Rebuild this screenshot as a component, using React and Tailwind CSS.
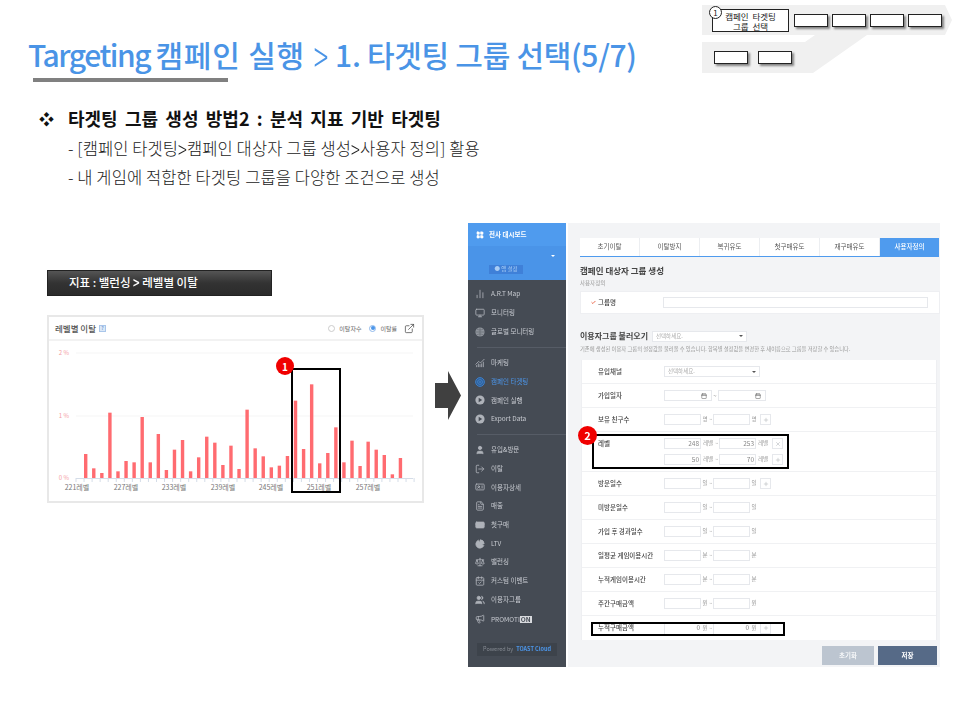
import React from "react";
import {
  LayoutGrid, ChartNoAxesColumn, Monitor, ChartNoAxesCombined, User, LogOut,
  IdCard, FileText, CreditCard, ChartPie, Scale, CalendarCheck, Users, Megaphone, Calendar, Plus, X, Check, ExternalLink,
} from "lucide-react";

const bars = [72,29,15,196,20,51,47,183,47,132,24,85,114,20,62,124,106,39,97,27,205,89,65,32,37,66,232,87,281,44,75,152,47,112,36,109,85,69,11,60];
const xLabels = [["221레벨",77],["227레벨",126],["233레벨",174],["239레벨",223],["245레벨",271],["251레벨",319],["257레벨",368]];

function Chart() {
  return (
    <svg width="373" height="159" viewBox="49 342 373 159" className="block">
      {[[354,"2 %"],[417,"1 %"],[479,"0 %"]].map(([y,t]) => (
        <g key={t}>
          {y !== 479 && <line x1="76" x2="413" y1={y} y2={y} stroke="#f5f5f5" strokeWidth="1" />}
          <text x="69" y={y + 1.5} textAnchor="end" fontSize="6" fill="#f4a0a2" fontFamily="Noto Sans CJK KR, sans-serif">{t}</text>
        </g>
      ))}
      <line x1="76" x2="413" y1="479.5" y2="479.5" stroke="#d5dde8" />
      {Array.from({ length: 43 }).map((_, i) => (
        <line key={i} x1={76 + i * 8.05} x2={76 + i * 8.05} y1="479" y2="483" stroke="#d5dde8" />
      ))}
      {bars.map((h, i) => (
        <rect key={i} x={85.7 + i * 8.07 - 1.7} y={479 - h / 3} width="3.4" height={h / 3} fill="#ff6b70" />
      ))}
      {xLabels.map(([t, x]) => (
        <text key={t} x={x} y="490.5" textAnchor="middle" fontSize="7" fill="#777" fontFamily="Noto Sans CJK KR, sans-serif">{t}</text>
      ))}
    </svg>
  );
}

const navBox = "w-[34px] h-[13px] bg-white border border-[#222] shadow-[2px_2px_2px_rgba(0,0,0,0.45)]";

function Nav() {
  return (
    <div className="relative w-[250px] h-[68px] mt-[5px] mr-[8px]">
      <svg width="250" height="68" viewBox="0 0 250 68" className="absolute inset-0">
        <polygon points="0,0 243,0 250,15 243,30 165,30 111,68 0,68 0,37 103,37 113,30 0,30" fill="#f0f0f0" />
      </svg>
      <div className="relative flex items-center h-[31px] pl-[10px] gap-[4px]">
        <div className="relative w-[77px] h-[23px] mr-[1px] bg-white border border-[#222] flex items-center justify-center text-center text-[8.5px] leading-[10px] text-[#222]">
          <span>캠페인 &nbsp;타겟팅<br />그룹 &nbsp;선택</span>
          <div className="absolute -left-[4px] -top-[4px] w-[13px] h-[13px] rounded-full bg-white border border-[#222] flex items-center justify-center text-[8px] leading-none">1</div>
        </div>
        <div className={navBox} />
        <div className={navBox} />
        <div className={navBox} />
        <div className={navBox} />
      </div>
      <div className="relative flex items-center pl-[12px] gap-[10px] mt-[15px]">
        <div className={navBox} />
        <div className={navBox} />
      </div>
    </div>
  );
}

function PlayIcon() {
  return (
    <svg width="10" height="10" viewBox="0 0 10 10" className="shrink-0">
      <circle cx="5" cy="5" r="4.6" fill="#aeb2b9" />
      <polygon points="3.7,2.8 7.2,5 3.7,7.2" fill="#454b54" />
    </svg>
  );
}
function GlobeIcon() {
  return (
    <svg width="10" height="10" viewBox="0 0 10 10" className="shrink-0">
      <circle cx="5" cy="5" r="4.6" fill="#8f949c" />
      <path d="M5 .5v9M.5 5h9M2 2.2c2 1 4 1 6 0M2 7.8c2-1 4-1 6 0" stroke="#5f646d" strokeWidth=".6" fill="none" />
    </svg>
  );
}
function TargetIcon() {
  return (
    <svg width="10" height="10" viewBox="0 0 10 10" className="shrink-0">
      <circle cx="5" cy="5" r="4.4" fill="#2f5f96" stroke="#3f7fc8" />
      <circle cx="5" cy="5" r="2.4" fill="none" stroke="#3f7fc8" />
      <circle cx="5" cy="5" r=".9" fill="#3f7fc8" />
    </svg>
  );
}
const wrap = (C, fill) => () => <C size={10} strokeWidth={2} className="text-[#aeb2b9] shrink-0" fill={fill ? "currentColor" : "none"} />;

const side1 = [
  [wrap(ChartNoAxesColumn), "A.R.T Map"], [wrap(Monitor), "모니터링"], [GlobeIcon, "글로벌 모니터링"],
];
const side2 = [
  [wrap(ChartNoAxesCombined), "마케팅"], [TargetIcon, "캠페인 타겟팅", true], [PlayIcon, "캠페인 실행"], [PlayIcon, "Export Data"],
];
const side3 = [
  [wrap(User, true), "유입&방문"], [wrap(LogOut), "이탈"], [wrap(IdCard), "이용자상세"], [wrap(FileText), "매출"], [wrap(CreditCard, true), "첫구매"],
  [wrap(ChartPie, true), "LTV"], [wrap(Scale), "밸런싱"], [wrap(CalendarCheck), "커스텀 이벤트"], [wrap(Users, true), "이용자그룹"],
];

function SideItem({ icon: Icon, label, active, h = "h-[18.9px]" }) {
  return (
    <div className={`flex items-center ${h} pl-[7px] gap-[6px] text-[6.5px] ${active ? "text-[#4c96ea]" : "text-[#c9ccd2]"}`}>
      <Icon />
      <span>{label}</span>
    </div>
  );
}

function Sidebar() {
  return (
    <div className="w-[98px] h-full bg-[#454b54] flex flex-col shrink-0">
      <div className="h-[23px] bg-[#4f9bee] flex items-center pl-[8px] gap-[5px] text-white text-[6.5px] font-bold">
        <LayoutGrid size={8} fill="white" />
        전사 대시보드
      </div>
      <div className="h-[34px] bg-[#4a94e8] relative flex items-end pl-[21px] pb-[6px]">
        <div className="w-[34px] h-[9px] bg-[#3f80d8] flex items-center justify-center text-[5.5px] text-[#a9cdf5]">● 앱 설정</div>
        <div className="absolute right-[11px] top-[9px] w-0 h-0 border-x-[2px] border-x-transparent border-t-[2px] border-t-white" />
      </div>
      <div className="pt-[4.5px]">
        {side1.map(([i, l]) => <SideItem key={l} icon={i} label={l} />)}
      </div>
      <div className="ml-[9px] h-px bg-[#565c66] my-[5.5px]" />
      <div>
        {side2.map(([i, l, a]) => <SideItem key={l} icon={i} label={l} active={a} />)}
      </div>
      <div className="ml-[9px] h-px bg-[#565c66] my-[5px]" />
      <div className="pt-[1px]">
        {side3.map(([i, l]) => <SideItem key={l} icon={i} label={l} h="h-[18.7px]" />)}
        <div className="flex items-center h-[21px] pl-[7px] gap-[6px] text-[6.5px] text-[#c9ccd2]">
          <Megaphone size={10} className="text-[#aeb2b9]" />
          <span className="flex items-center">PROMOTI<span className="bg-[#d8dade] text-[#454b54] font-bold px-[1px] leading-[7px] text-[6.5px]">ON</span></span>
        </div>
      </div>
      <div className="mx-[9px] mt-[13px] h-[13px] bg-[#3d434b] flex items-center justify-center gap-[3px] text-[5.5px] text-[#868b93]">
        Powered by <span className="text-[#4c96ea] font-bold">TOAST Cloud</span>
      </div>
    </div>
  );
}

const inputCls = "h-[11px] bg-white border border-[#e6e8ec] flex items-center justify-end text-[6.5px] text-[#888] pr-[1px] shrink-0";

function Range({ unit, a, b, btn, wide, bare }) {
  const box = bare ? "h-[11px] bg-white border-l border-[#e6e8ec] flex items-center justify-end text-[6.5px] text-[#888] pr-[1px] shrink-0 w-[37px]" : `${inputCls} w-[37px]`;
  return (
    <div className="flex items-center h-[11px] text-[5.5px] text-[#999]">
      <div className={box}>{a}</div>
      <span className={`text-center ${wide ? "w-[12px]" : "w-[6px]"} ml-[1px]`}>{unit}</span>
      <span className="w-[5px] text-center">~</span>
      <div className={box}>{b}</div>
      <span className={`${wide ? "w-[12px]" : "w-[6px]"} text-center ml-[1px]`}>{unit}</span>
      {btn && (
        <div className="w-[11px] h-[11px] ml-[3px] bg-white border border-[#e6e8ec] flex items-center justify-center text-[#a9adb3]">
          {btn === "x" ? <X size={6} /> : <Plus size={6} />}
        </div>
      )}
    </div>
  );
}

function Row({ label, children, h = "h-[24px]", top, last }) {
  return (
    <div className={`flex ${h} ${top ? "items-start pt-[7px]" : "items-center"} ${last ? "" : "border-b border-[#f0f1f3]"} relative`}>
      <div className="w-[82px] pl-[16px] text-[6.5px] font-medium text-[#444] shrink-0">{label}</div>
      {children}
    </div>
  );
}

function SelectBox({ w, text = "선택하세요." }) {
  return (
    <div className={`${w} h-[11px] bg-white border border-[#e6e8ec] flex items-center justify-between px-[3px] text-[5.5px] text-[#aaa]`}>
      {text}
      <div className="w-0 h-0 border-x-[2px] border-x-transparent border-t-[2px] border-t-[#555]" />
    </div>
  );
}

function Main() {
  const tabs = ["초기이탈", "이탈방지", "복귀유도", "첫구매유도", "재구매유도", "사용자정의"];
  return (
    <div className="flex-1 ml-[2px] bg-[#f3f4f6] pt-[15px] pl-[12px] relative">
      <div className="flex h-[19px] w-[359px] bg-white border-b border-[#4f9bee]">
        {tabs.map((t, i) => (
          <div key={t} className={`flex-1 flex items-center justify-center text-[6.5px] ${i === 5 ? "bg-[#4f9bee] text-white font-medium" : "border-r border-[#eceef1] text-[#555]"}`}>{t}</div>
        ))}
      </div>
      <div className="mt-[7px] text-[8.5px] leading-[12px] font-bold text-[#444]">캠페인 대상자 그룹 생성</div>
      <div className="mt-[3px] text-[5.5px] leading-[8px] text-[#999]">사용자정의</div>
      <div className="mt-[4px] h-[23px] w-[360px] bg-white border border-[#eeeff2] flex items-center pl-[10px]">
        <Check size={5} strokeWidth={4} className="text-[#e8502f]" />
        <span className="ml-[2px] text-[6.5px] font-medium text-[#444]">그룹명</span>
        <div className="ml-[47px] w-[265px] h-[11px] border border-[#e6e8ec] bg-white" />
      </div>
      <div className="mt-[16px] flex items-center h-[12px]">
        <span className="text-[8px] font-bold text-[#444] w-[72px] whitespace-nowrap">이용자그룹 불러오기</span>
        <SelectBox w="w-[95px]" />
      </div>
      <div className="mt-[3px] text-[5.3px] leading-[8px] text-[#999] whitespace-nowrap">기존에 생성된 이용자 그룹의 설정값을 불러올 수 있습니다. 항목별 설정값을 변경한 후 새이름으로 그룹을 저장할 수 있습니다.</div>
      <div className="mt-[7px] ml-[1px] w-[356px] bg-white border-x border-[#eeeff2]">
        <Row label="유입채널"><SelectBox w="w-[96px]" /></Row>
        <Row label="가입일자">
          <div className="flex items-center text-[6px] text-[#999]">
            <div className={`${inputCls} w-[48px] pr-[4px]`}><Calendar size={6} className="text-[#555]" /></div>
            <span className="w-[6px] text-center">~</span>
            <div className={`${inputCls} w-[48px] pr-[4px]`}><Calendar size={6} className="text-[#555]" /></div>
          </div>
        </Row>
        <Row label="보유 친구수"><Range unit="명" btn="+" /></Row>
        <Row label="레벨" h="h-[40px]" top>
          <div className="flex flex-col gap-[5px] -mt-[1px]">
            <Range unit="레벨" a="248" b="253" btn="x" wide />
            <Range unit="레벨" a="50" b="70" btn="+" wide />
          </div>
        </Row>
        <Row label="방문일수"><Range unit="일" btn="+" /></Row>
        <Row label="미방문일수"><Range unit="일" /></Row>
        <Row label="가입 후 경과일수"><Range unit="일" /></Row>
        <Row label="일평균 게임이용시간"><Range unit="분" /></Row>
        <Row label="누적게임이용시간"><Range unit="분" /></Row>
        <Row label="주간구매금액"><Range unit="원" /></Row>
        <Row label="누적구매금액" last><Range unit="원" a="0" b="0" btn="+" bare /></Row>
      </div>
      <div className="mt-[6px] flex justify-end gap-[4px] w-[357px]">
        <div className="w-[52px] h-[19px] bg-[#bcc5d0] flex items-center justify-center text-[6.5px] text-white font-medium">초기화</div>
        <div className="w-[59px] h-[19px] bg-[#566a87] flex items-center justify-center text-[6.5px] text-white font-bold">저장</div>
      </div>
      <div className="absolute left-[24px] top-[211px] w-[197px] h-[35px] border-2 border-black" />
      <div className="absolute left-[10px] top-[203px] w-[19px] h-[19px] rounded-full bg-[#f00000] text-white flex items-center justify-center text-[11px] font-bold">2</div>
      <div className="absolute left-[23px] top-[399px] w-[194px] h-[14px] border-2 border-black" />
    </div>
  );
}

function Chev({ s = "scale-y-[1.4]", c = "" }) {
  return <span className={`inline-block ${s} ${c}`}>&gt;</span>;
}

export default function App() {
  return (
    <div className="w-[960px] h-[720px] bg-white overflow-hidden flex flex-col font-['Noto_Sans_CJK_KR','Noto_Sans',sans-serif] text-[#111]">
      <header className="h-[84px] flex justify-between shrink-0">
        <div className="pl-[28px] pt-[32px]">
          <h1 className="text-[30px] leading-[44px] font-medium text-[#4a94e6] whitespace-nowrap">
            <span className="tracking-[-1.45px]">Targeting </span>
            <span className="tracking-[0.8px]">캠페인 실행 </span>
            <Chev s="scale-y-[1.5] scale-x-[0.9]" c="font-light" />
            <span className="tracking-[-0.3px]"> 1. 타겟팅 그룹 선택(5/7)</span>
          </h1>
          <div className="ml-[5px] w-[195px] h-[4px] bg-[#808080] mt-[2px]" />
        </div>
        <Nav />
      </header>

      <section className="pl-[39px] pt-[23px] h-[139px] shrink-0">
        <div className="flex items-center h-[22px]">
          <span className="w-[29px] text-[15px] leading-none">❖</span>
          <span className="text-[18px] font-bold [word-spacing:3.2px] whitespace-nowrap">타겟팅 그룹 생성 방법2 : 분석 지표 기반 타겟팅</span>
        </div>
        <div className="pl-[29px] mt-[5px] text-[16.5px] leading-[29px] tracking-[0.1px] text-[#222] font-light whitespace-nowrap">
          <div>- [캠페인 타겟팅<Chev />캠페인 대상자 그룹 생성<Chev />사용자 정의] 활용</div>
          <div>- 내 게임에 적합한 타겟팅 그룹을 다양한 조건으로 생성</div>
        </div>
      </section>

      <div className="flex items-start">
        <div className="ml-[47px] w-[377px] mt-[47px]">
          <div className="w-[225px] h-[26px] bg-gradient-to-b from-[#555555] via-[#333333] to-[#2b2b2b] border border-[#222] flex items-center pl-[21px] text-white text-[11.5px] font-medium whitespace-pre">
            지표 : 밸런싱 <Chev /> 레벨별 이탈
          </div>
          <div className="relative mt-[19px] h-[188px] border-2 border-[#e8e8e8] bg-white">
            <div className="h-[24px] border-b-2 border-[#f2f2f2] flex items-center pl-[6px] pr-[7px]">
              <span className="text-[8.5px] font-medium text-[#555]">레벨별 이탈</span>
              <span className="ml-[3px] w-[7px] h-[7px] bg-[#dbe8f7] border border-[#a9c6ea] text-[5px] text-[#4c86cc] flex items-center justify-center">?</span>
              <div className="ml-auto flex items-center text-[6px] text-[#666]">
                <span className="w-[7px] h-[7px] rounded-full border border-[#ccc] mr-[4px]" />이탈자수
                <span className="ml-[8px] w-[7px] h-[7px] rounded-full border border-[#8fb9ec] bg-white flex items-center justify-center mr-[4px]"><span className="w-[4px] h-[4px] rounded-full bg-[#4c96ea]" /></span>이탈률
                <ExternalLink size={11} strokeWidth={1.6} className="ml-[7px] text-[#444]" />
              </div>
            </div>
            <Chart />
            <div className="absolute left-[242px] top-[51px] w-[50px] h-[125px] border-2 border-black" />
            <div className="absolute left-[227px] top-[40px] w-[18px] h-[18px] rounded-full bg-[#f00000] text-white flex items-center justify-center text-[10px] font-bold">1</div>
          </div>
        </div>
        <svg width="26" height="50" viewBox="0 0 26 50" className="ml-[11px] mt-[148px] shrink-0">
          <polygon points="0,12 13,12 13,0 26,24.5 13,49 13,37 0,37" fill="#404040" />
        </svg>
        <div className="ml-[7px] w-[472px] h-[444px] flex blur-[0.3px]">
          <Sidebar />
          <Main />
        </div>
      </div>
    </div>
  );
}
